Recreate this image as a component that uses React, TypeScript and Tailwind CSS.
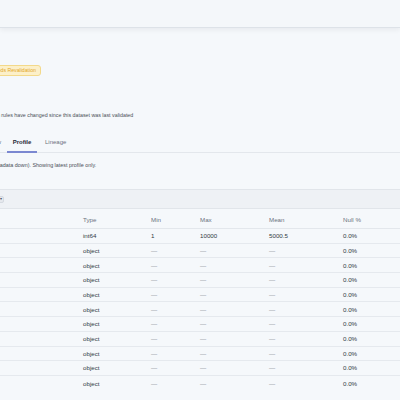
import React from "react";

const rows = [
  { type: "int64", min: "1", max: "10000", mean: "5000.5", nul: "0.0%" },
  ...Array.from({ length: 10 }, () => ({ type: "object", min: "—", max: "—", mean: "—", nul: "0.0%" })),
];

const cols = "grid grid-cols-[83px_68px_49px_69px_74px_1fr]";

export default function App() {
  return (
    <div className="w-[400px] h-[400px] overflow-hidden bg-[#f5f8fb] text-[#374151]" style={{ fontFamily: "'Liberation Sans', Arial, sans-serif" }}>
      <div className="h-[28px] bg-[#f4f7fa] border-b border-[#dde2e8] shadow-[0_2px_5px_rgba(15,23,42,0.06)]" />
      <div className="h-[37px]" />
      <div className="flex">
        <span className="-ml-[14px] h-[11px] px-[4px] flex items-center rounded-[3px] border border-[#f3d98a] bg-[#fcf0c9] text-[#e3a72a] text-[5.2px] leading-none whitespace-nowrap">
          Needs Revalidation
        </span>
      </div>
      <div className="h-[35px]" />
      <div className="flex h-[10px] items-center">
        <span className="-ml-[23px] text-[5.3px] text-[#4a4f57] whitespace-nowrap leading-none">
          Validation rules have changed since this dataset was last validated
        </span>
      </div>
      <div className="h-[14px]" />
      <div className="flex items-end h-[18px] border-b border-[#e3e7ec] text-[6px]">
        <div className="-ml-[24px] w-[31px] pb-[5px] text-[#6b7280] whitespace-nowrap">Overview</div>
        <div className="w-[30px] pb-[4px] border-b-[2px] border-[#7b88d1] -mb-px text-center font-bold text-[#1f2937]">Profile</div>
        <div className="ml-[8px] pb-[5px] text-[#6b7280]">Lineage</div>
      </div>
      <div className="h-[8px]" />
      <div className="flex h-[10px] items-center">
        <span className="-ml-[11px] text-[5.4px] text-[#4a4f57] whitespace-nowrap leading-none">
          (metadata down). Showing latest profile only.
        </span>
      </div>
      <div className="h-[18px]" />
      <div className="h-[20px] bg-[#eef1f5] border-y border-[#e1e5ea] flex items-center">
        <div className="-ml-[6px] w-[10px] h-[7px] rounded-[2px] border border-[#d5dae1] bg-[#e5e8ed] flex items-center justify-end pr-[1px] text-[4px] text-[#4b5563]">▾</div>
      </div>
      <div className={`${cols} h-[20px] items-center pt-[2px] border-b border-[#e3e7ec] text-[6.2px] text-[#6b7280]`}>
        <div />
        <div>Type</div>
        <div>Min</div>
        <div>Max</div>
        <div>Mean</div>
        <div>Null %</div>
      </div>
      {rows.map((r, i) => (
        <div
          key={i}
          className={`${cols} h-[14.7px] items-center text-[6.2px] text-[#333a44] ${i < rows.length - 1 ? "border-b border-[#e5e9ee]" : ""}`}
        >
          <div />
          <div>{r.type}</div>
          <div className={r.min === "—" ? "text-[#80868f]" : ""}>{r.min}</div>
          <div className={r.max === "—" ? "text-[#80868f]" : ""}>{r.max}</div>
          <div className={r.mean === "—" ? "text-[#80868f]" : ""}>{r.mean}</div>
          <div>{r.nul}</div>
        </div>
      ))}
    </div>
  );
}
